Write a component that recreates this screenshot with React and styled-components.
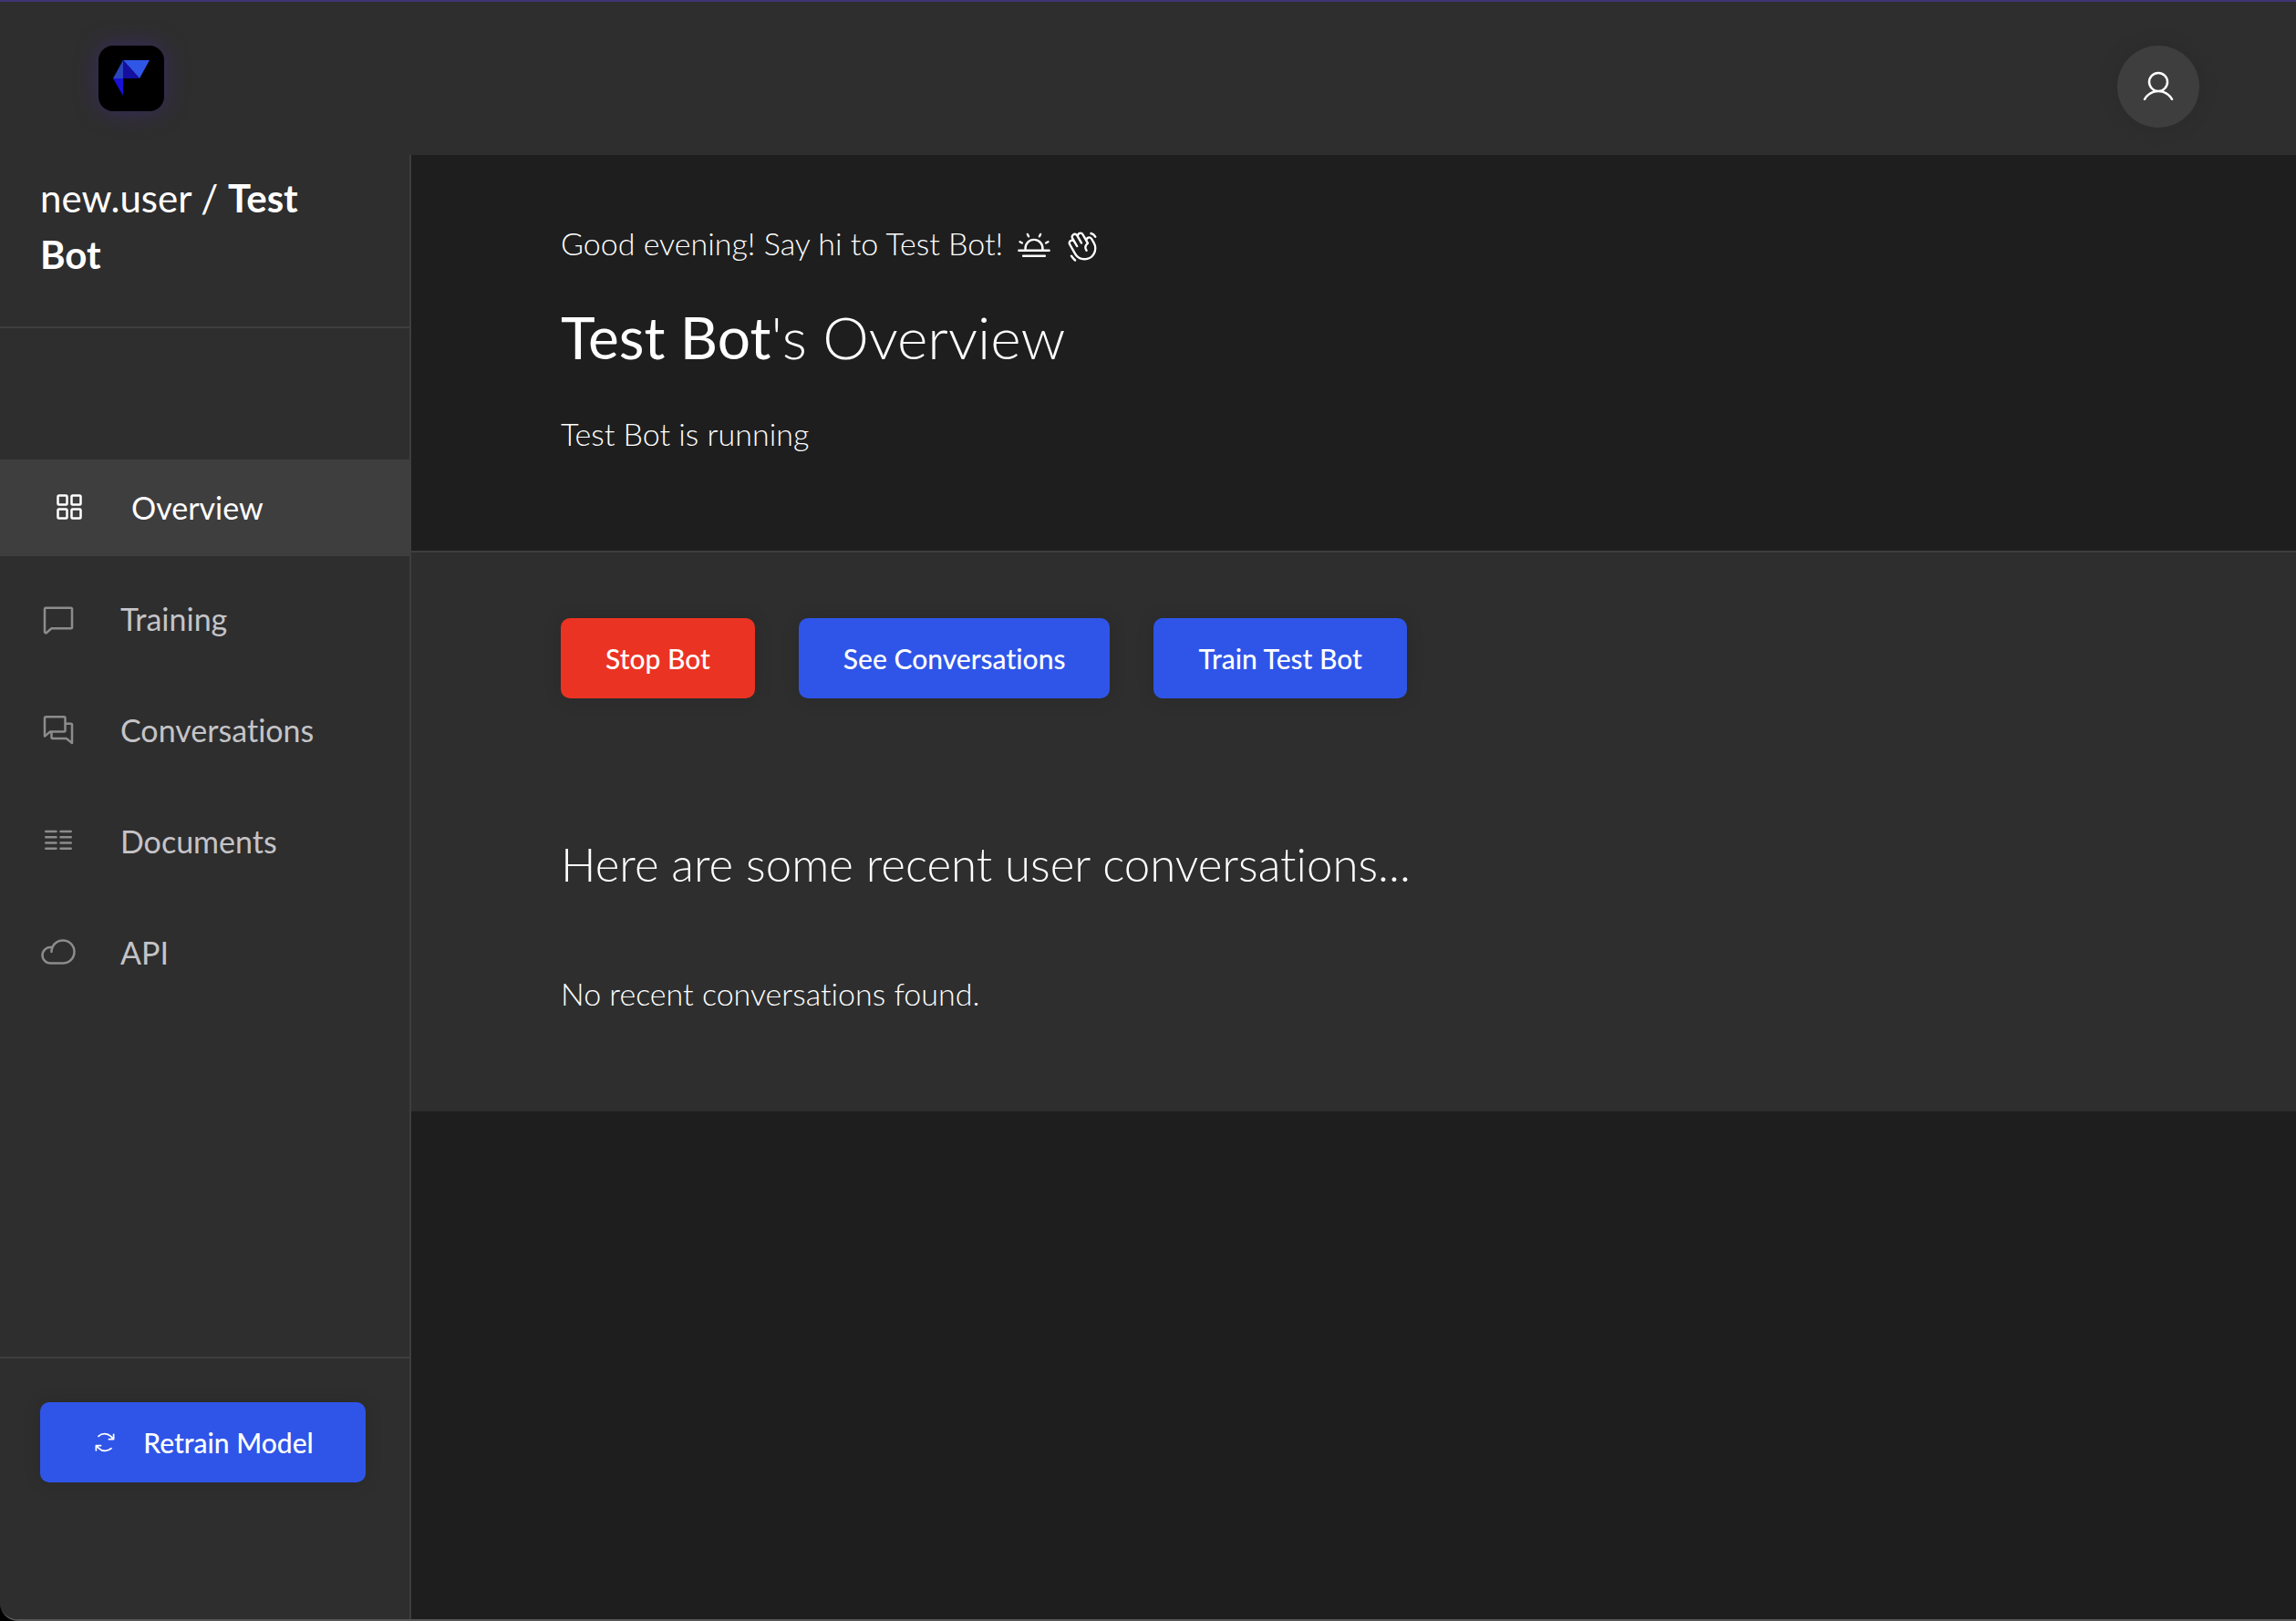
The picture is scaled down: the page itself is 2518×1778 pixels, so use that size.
import React from 'react';
import styled, { createGlobalStyle } from 'styled-components';
import {
  PiUser,
  PiSquaresFour,
  PiChat,
  PiChats,
  PiTextColumns,
  PiCloud,
  PiArrowsClockwise,
  PiSunHorizon,
  PiHandWaving,
} from 'react-icons/pi';

const GlobalStyle = createGlobalStyle`
  *, *::before, *::after { box-sizing: border-box; }
  body {
    margin: 0;
    background: #000;
    color: #fff;
    font-family: Lato, "Open Sans", sans-serif;
    font-variant-ligatures: none;
  }
  h1, h2, p, ul { margin: 0; padding: 0; }
`;

const Window = styled.div`
  display: flex;
  flex-direction: column;
  min-height: 100vh;
  background: #1e1e1e;
  border-top: 2px solid #3f3575;
  border-bottom: 2px solid #575757;
  border-bottom-left-radius: 20px;
  overflow: hidden;
`;

const Header = styled.header`
  display: flex;
  justify-content: space-between;
  align-items: flex-start;
  padding: 48px 106px 30px 108px;
  background: #2e2e2e;
`;

const LogoLink = styled.a`
  display: block;
  width: 72px;
  height: 72px;
  border-radius: 16px;
  background: #000;
  box-shadow: 0 0 24px rgba(68, 40, 150, 0.5);
`;

const Avatar = styled.button`
  display: grid;
  place-items: center;
  width: 90px;
  height: 90px;
  padding: 0;
  border: 0;
  border-radius: 50%;
  background: #3e3e3e;
  color: #fff;
  font-size: 40px;
  box-shadow: 0 0 24px rgba(0, 0, 0, 0.1);
`;

const Body = styled.div`
  display: flex;
  flex: 1;
`;

const Sidebar = styled.aside`
  display: flex;
  flex-direction: column;
  flex: 0 0 451px;
  background: #2e2e2e;
  border-right: 2px solid #3e3e3e;
`;

const Crumb = styled.h2`
  padding: 16px 80px 48px 44px;
  border-bottom: 2px solid #3e3e3e;
  font-size: 42px;
  line-height: 62px;
  font-weight: 400;
`;

const Nav = styled.nav`
  flex: 1;
  padding-top: 144px;

  ul {
    display: grid;
    gap: 16px;
    list-style: none;
  }
`;

const NavLink = styled.a`
  display: flex;
  align-items: center;
  gap: 48px;
  height: 106px;
  padding-bottom: 2px;
  padding-left: ${(p) => (p.$active ? 56 : 44)}px;
  background: ${(p) => (p.$active ? '#3e3e3e' : 'transparent')};
  color: ${(p) => (p.$active ? '#fff' : '#c4c4c8')};
  font-size: 34px;
  text-decoration: none;

  svg {
    width: 40px;
    height: 40px;
    color: ${(p) => (p.$active ? '#fff' : '#8c8c8c')};
  }
`;

const SidebarFooter = styled.div`
  padding: 48px 48px 150px 44px;
  border-top: 2px solid #3e3e3e;
`;

const Button = styled.button`
  display: flex;
  align-items: center;
  justify-content: center;
  gap: 28px;
  width: ${(p) => (p.$wide ? '100%' : 'auto')};
  height: 88px;
  padding: 0 49px;
  border: 0;
  border-radius: 10px;
  background: ${(p) => (p.$danger ? '#eb3323' : '#2f55e8')};
  color: #fff;
  font-family: inherit;
  font-size: 30px;
  font-weight: 500;
  font-variant-ligatures: none;
  white-space: nowrap;
  box-shadow: 0 0 20px rgba(0, 0, 0, 0.12);

  svg {
    width: 28px;
    height: 28px;
  }
`;

const Main = styled.main`
  flex: 1;
  min-width: 0;
`;

const Intro = styled.section`
  padding: 63px 164px 96px;
  border-bottom: 2px solid #3e3e3e;
`;

const Greeting = styled.p`
  display: flex;
  align-items: center;
  gap: 15px;
  font-size: 34px;
  line-height: 68px;
  font-weight: 300;

  svg {
    width: 38px;
    height: 38px;
    margin-top: 6px;
  }
`;

const Title = styled.h1`
  padding: 24px 0 29px;
  font-size: 64px;
  line-height: 90px;
  font-weight: 300;
`;

const Text = styled.p`
  font-size: 34px;
  line-height: 64px;
  font-weight: 300;
`;

const Content = styled.section`
  padding: 72px 164px 97px;
  background: #2e2e2e;
`;

const Actions = styled.div`
  display: flex;
  gap: 48px;
`;

const SectionTitle = styled.h2`
  padding: 144px 0 72px;
  font-size: 51px;
  line-height: 76px;
  font-weight: 300;
`;

const links = [
  { label: 'Overview', Icon: PiSquaresFour, active: true },
  { label: 'Training', Icon: PiChat },
  { label: 'Conversations', Icon: PiChats },
  { label: 'Documents', Icon: PiTextColumns },
  { label: 'API', Icon: PiCloud },
];

function Logo() {
  return (
    <svg width="72" height="72" viewBox="0 0 72 72" aria-hidden="true">
      <polygon points="27,16 56,16 45,36" fill="#3056e8" />
      <polygon points="27,16 45,36 27,36" fill="#150fa0" />
      <polygon points="27,16 27,36 16,36" fill="#2946bb" />
      <polygon points="16,36 27,36 27,55" fill="#1712d6" />
    </svg>
  );
}

export default function App() {
  return (
    <Window>
      <GlobalStyle />
      <Header>
        <LogoLink href="#home" aria-label="Home">
          <Logo />
        </LogoLink>
        <Avatar type="button" aria-label="Account">
          <PiUser />
        </Avatar>
      </Header>
      <Body>
        <Sidebar>
          <Crumb>
            new.user / <strong>Test</strong> <strong>Bot</strong>
          </Crumb>
          <Nav>
            <ul>
              {links.map(({ label, Icon, active }) => (
                <li key={label}>
                  <NavLink href={`#${label.toLowerCase()}`} $active={active}>
                    <Icon />
                    {label}
                  </NavLink>
                </li>
              ))}
            </ul>
          </Nav>
          <SidebarFooter>
            <Button type="button" $wide>
              <PiArrowsClockwise />
              Retrain Model
            </Button>
          </SidebarFooter>
        </Sidebar>
        <Main>
          <Intro>
            <Greeting>
              Good evening! Say hi to Test Bot!
              <PiSunHorizon />
              <PiHandWaving />
            </Greeting>
            <Title>
              <strong>Test Bot</strong>'s Overview
            </Title>
            <Text>Test Bot is running</Text>
          </Intro>
          <Content>
            <Actions>
              <Button type="button" $danger>
                Stop Bot
              </Button>
              <Button type="button">See Conversations</Button>
              <Button type="button">Train Test Bot</Button>
            </Actions>
            <SectionTitle>Here are some recent user conversations...</SectionTitle>
            <Text>No recent conversations found.</Text>
          </Content>
        </Main>
      </Body>
    </Window>
  );
}
